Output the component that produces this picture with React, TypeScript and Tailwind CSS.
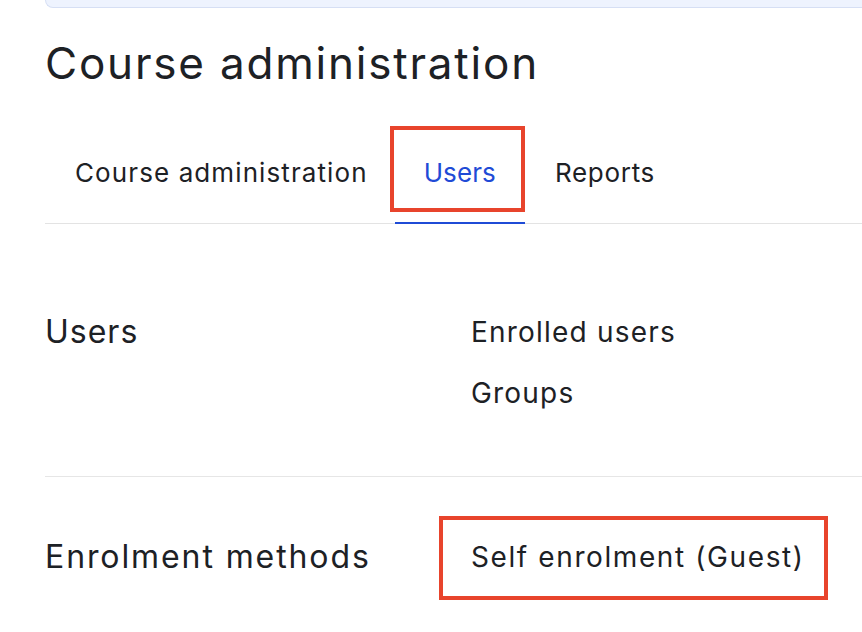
export default function App() {
  return (
    <div className="min-h-screen bg-white pl-[45px] text-[#1d2125]" style={{ fontFamily: "Inter, 'Noto Sans', sans-serif" }}>
      <div className="h-[8px] rounded-bl-lg border-b border-l border-[#d6dff4] bg-[#eef3fe]" />

      <h1 className="mt-[28px] text-[44px] font-normal leading-[54px] tracking-[1.8px]">Course administration</h1>

      <nav className="mt-[36px] flex border-b border-[#e3e3e3] text-[26px] leading-[36px]">
        <a className="-mb-px border-b-2 border-transparent pl-[30px] pr-[27px] pt-[29px] pb-[31px] tracking-[1.1px]">Course administration</a>
        <a className="relative -mb-px border-b-2 border-[#1f4bd6] px-[29px] pt-[29px] pb-[31px] tracking-[0.1px] text-[#1f4bd6]">
          Users
          <span className="absolute -left-[5px] right-0 top-0 bottom-[10px] border-4 border-[#e8442c]" />
        </a>
        <a className="-mb-px border-b-2 border-transparent px-[30px] pt-[29px] pb-[31px] tracking-[0.7px]">Reports</a>
      </nav>

      <section className="grid grid-cols-[426px_1fr] border-b border-[#e6e6e6] pt-[88px] pb-[63px]">
        <h2 className="text-[32px] leading-[40px] tracking-[1px]">Users</h2>
        <div className="flex flex-col gap-[21px] text-[28px] leading-[40px] tracking-[1.2px]">
          <a>Enrolled users</a>
          <a>Groups</a>
        </div>
      </section>

      <section className="grid grid-cols-[426px_1fr] pt-[60px] pb-[40px]">
        <h2 className="text-[32px] leading-[40px] tracking-[1.9px]">Enrolment methods</h2>
        <div className="text-[28px] leading-[40px] tracking-[1.6px]">
          <a className="relative inline-block">
            Self enrolment (Guest)
            <span className="absolute -left-[32px] -right-[23px] -top-[21px] -bottom-[23px] border-4 border-[#e8442c]" />
          </a>
        </div>
      </section>
    </div>
  );
}
